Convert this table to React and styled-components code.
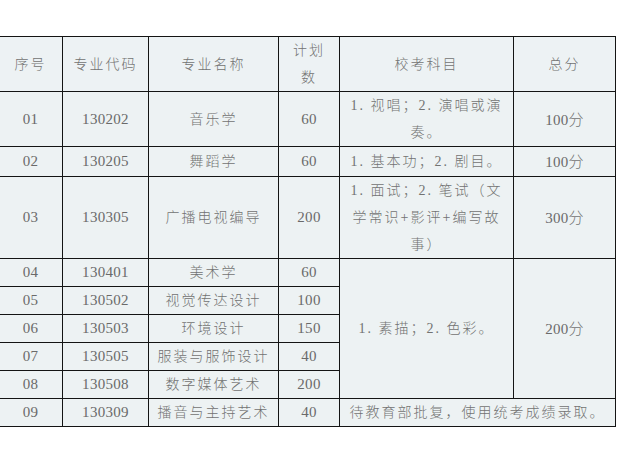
import React from 'react';
import styled, { createGlobalStyle } from 'styled-components';

const GlobalStyle = createGlobalStyle`
  html, body {
    margin: 0;
    padding: 0;
    background: #fff;
  }
  body {
    font-family: "Liberation Serif", "Noto Sans CJK SC", serif;
  }
`;

const Page = styled.div`
  width: 617px;
  height: 463px;
  overflow: hidden;
  padding-top: 36px;
  box-sizing: border-box;
`;

const Table = styled.table`
  margin-left: -2px;
  width: 617px;
  table-layout: fixed;
  border-collapse: collapse;
  background: #edf2f3;
`;

const Cell = styled.td`
  border: 1.5px solid #141414;
  padding: 0;
  text-align: center;
  vertical-align: middle;
  font-size: ${(p) => (p.$num ? '15px' : '14px')};
  line-height: 27px;
  letter-spacing: ${(p) => (p.$num ? '0.3px' : '2px')};
  color: ${(p) => (p.$num ? '#6a6a6a' : '#727272')};
  font-weight: ${(p) => (p.$num ? 400 : 300)};
  -webkit-font-smoothing: antialiased;
  background: ${(p) => (p.$head ? '#edf2f4' : '#edf2f3')};
`;

const Cjk = styled.span`
  font-family: "Noto Sans CJK SC", sans-serif;
  font-weight: 300;
  color: #727272;
`;

const widths = [64, 86, 130, 61, 174, 102];

const rows = [
  { no: '01', code: '130202', name: '音乐学', plan: '60' },
  { no: '02', code: '130205', name: '舞蹈学', plan: '60' },
  { no: '03', code: '130305', name: '广播电视编导', plan: '200' },
  { no: '04', code: '130401', name: '美术学', plan: '60' },
  { no: '05', code: '130502', name: '视觉传达设计', plan: '100' },
  { no: '06', code: '130503', name: '环境设计', plan: '150' },
  { no: '07', code: '130505', name: '服装与服饰设计', plan: '40' },
  { no: '08', code: '130508', name: '数字媒体艺术', plan: '200' },
  { no: '09', code: '130309', name: '播音与主持艺术', plan: '40' },
];

const Score = ({ n }) => (
  <>
    {n}
    <Cjk>分</Cjk>
  </>
);

const subjects = {
  '01': (
    <>
      1. 视唱；2. 演唱或演
      <br />
      奏。
    </>
  ),
  '02': <>1. 基本功；2. 剧目。</>,
  '03': (
    <>
      1. 面试；2. 笔试（文
      <br />
      学常识+影评+编写故
      <br />
      事）
    </>
  ),
};

const scores = { '01': '100', '02': '100', '03': '300' };

export default function App() {
  return (
    <Page>
      <GlobalStyle />
      <Table>
        <colgroup>
          {widths.map((w, i) => (
            <col key={i} style={{ width: w }} />
          ))}
        </colgroup>
        <thead>
          <tr>
            <Cell as="th" $head>序号</Cell>
            <Cell as="th" $head>专业代码</Cell>
            <Cell as="th" $head>专业名称</Cell>
            <Cell as="th" $head>
              计划
              <br />
              数
            </Cell>
            <Cell as="th" $head>校考科目</Cell>
            <Cell as="th" $head>总分</Cell>
          </tr>
        </thead>
        <tbody>
          {rows.map((r) => (
            <tr key={r.no}>
              <Cell $num>{r.no}</Cell>
              <Cell $num>{r.code}</Cell>
              <Cell>{r.name}</Cell>
              <Cell $num>{r.plan}</Cell>
              {subjects[r.no] && (
                <>
                  <Cell>{subjects[r.no]}</Cell>
                  <Cell $num>
                    <Score n={scores[r.no]} />
                  </Cell>
                </>
              )}
              {r.no === '04' && (
                <>
                  <Cell rowSpan={5}>1. 素描；2. 色彩。</Cell>
                  <Cell $num rowSpan={5}>
                    <Score n="200" />
                  </Cell>
                </>
              )}
              {r.no === '09' && (
                <Cell colSpan={2}>待教育部批复，使用统考成绩录取。</Cell>
              )}
            </tr>
          ))}
        </tbody>
      </Table>
    </Page>
  );
}
